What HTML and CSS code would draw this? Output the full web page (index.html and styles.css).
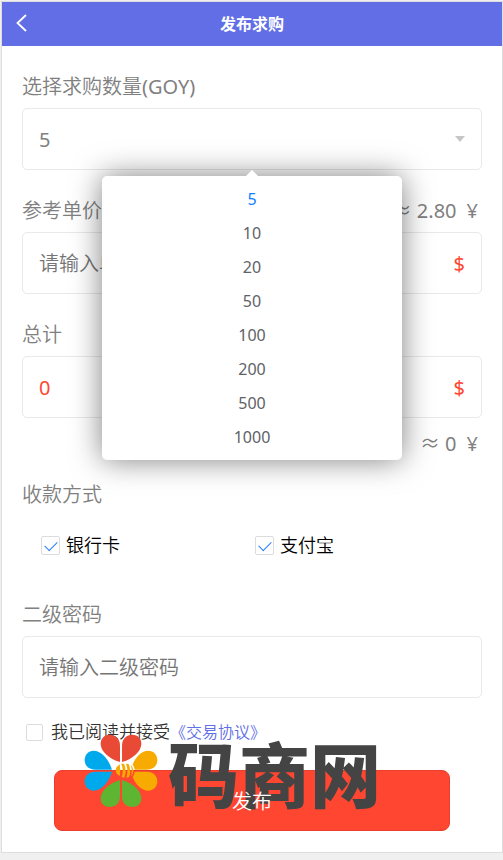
FILE: index.html
```
<!DOCTYPE html>
<html lang="zh-CN">
<head>
    <meta charset="UTF-8">
    <meta name="viewport" content="width=device-width, initial-scale=1">
    <title>发布求购</title>
    <link rel="stylesheet" href="styles.css">
</head>
<body>

<div class="page">
    <header class="header">
        <a href="#" class="back" aria-label="返回">
            <svg width="12" height="18" viewBox="0 0 12 18"><path d="M11 1 L2.5 9 L11 17" fill="none" stroke="#fff" stroke-width="1.8"/></svg>
        </a>
        <h1>发布求购</h1>
    </header>

    <form class="form">
        <div class="label-row">
            <label for="amount">选择求购数量<span class="coin">(GOY)</span></label>
        </div>
        <div class="field">
            <select id="amount">
                <option>5</option>
            </select>
            <span class="caret"></span>
            <!-- amount menu -->
            <div class="menu">
                <button type="button" class="active">5</button>
                <button type="button">10</button>
                <button type="button">20</button>
                <button type="button">50</button>
                <button type="button">100</button>
                <button type="button">200</button>
                <button type="button">500</button>
                <button type="button">1000</button>
            </div>
        </div>

        <div class="label-row">
            <label for="price">参考单价</label>
            <span class="approx"><span>≈ 2.80</span><span>¥</span></span>
        </div>
        <div class="field">
            <input type="text" id="price" placeholder="请输入单价">
            <span class="unit">$</span>
        </div>

        <div class="label-row">
            <label for="total">总计</label>
        </div>
        <div class="field">
            <input type="text" id="total" class="total" value="0" readonly>
            <span class="unit">$</span>
        </div>
        <div class="total-row">
            <span class="approx"><span>≈ 0</span><span>¥</span></span>
        </div>

        <div class="label-row pay-title">收款方式</div>
        <div class="pay">
            <label><input type="checkbox" checked>银行卡</label>
            <label><input type="checkbox" checked>支付宝</label>
        </div>

        <div class="label-row">
            <label for="password">二级密码</label>
        </div>
        <div class="field">
            <input type="password" id="password" placeholder="请输入二级密码">
        </div>

        <div class="agree">
            <input type="checkbox" id="agree">
            <label for="agree">我已阅读并接受</label><a href="#">《交易协议》</a>
        </div>

        <div class="submit">
            <button type="submit"><span>发布</span></button>
            <div class="watermark">
                <svg width="74" height="74" viewBox="0 0 222 222">
                    <g fill="#e84a35">
                        <path d="M108 84 V35 C108 12 93 2 77 2 C60 2 50 14 50 29 C50 52 75 74 108 84Z"/>
                        <path d="M114 84 V35 C114 12 129 2 145 2 C162 2 172 14 172 29 C172 52 147 74 114 84Z"/>
                    </g>
                    <g fill="#00a9eb">
                        <path d="M84 107 H35 C12 107 2 93 2 78 C2 62 13 50 29 50 C52 50 74 75 84 107Z"/>
                        <path d="M84 113 H35 C12 113 2 127 2 142 C2 158 13 170 29 170 C52 170 74 145 84 113Z"/>
                    </g>
                    <g fill="#f7aa00">
                        <path d="M152 107 H187 C210 107 220 93 220 78 C220 62 209 50 193 50 C172 50 154 70 146 92 Q151 98 152 107Z"/>
                        <path d="M152 113 H187 C210 113 220 127 220 142 C220 158 209 170 193 170 C172 170 154 150 146 128 Q151 122 152 113Z"/>
                        <path d="M107 91 Q95 99 95 109 Q95 119 107 127 Q111 109 107 91Z"/>
                        <path d="M112 89 L120 89 Q129 109 121 131 L113 129 Q120 109 112 89Z"/>
                        <path d="M126 89 L134 90 Q143 110 135 130 L127 131 Q134 110 126 89Z"/>
                        <path d="M140 92 Q148 99 148 110 Q148 121 141 127 Q146 110 140 92Z"/>
                    </g>
                    <g fill="#5db531">
                        <path d="M108 138 V187 C108 210 93 219 77 219 C60 219 50 208 50 193 C50 170 75 148 108 138Z"/>
                        <path d="M114 138 V187 C114 210 129 219 145 219 C162 219 172 208 172 193 C172 170 147 148 114 138Z"/>
                    </g>
                </svg>
                <span>码商网</span>
            </div>
        </div>
    </form>
</div>

</body>
</html>
```
FILE: styles.css
```
* {
    box-sizing: border-box;
}
body {
    margin: 0;
    padding: 1px 0 0 1px;
    background-color: #f0f0f0;
    font-family: "Noto Sans", "Noto Sans CJK SC", sans-serif;
    font-weight: 350;
    color: #808080;
}
input, select, button {
    font-family: inherit;
    font-weight: inherit;
}
.page {
    background-color: #fff;
    border: 1px solid #ddd;
}
.header {
    position: relative;
    height: 44px;
    background-color: #616ee5;
    color: #fff;
}
.header h1 {
    margin: 0;
    font-size: 16px;
    line-height: 44px;
    text-align: center;
}
.back {
    position: absolute;
    left: 13px;
    top: 12px;
}
.back svg {
    display: block;
}
.form {
    padding: 0 20px 21px;
}
.label-row {
    display: flex;
    justify-content: space-between;
    padding: 27px 0 7px;
    font-size: 20px;
    line-height: 28px;
}
.coin {
    font-weight: 400;
}
.approx {
    display: flex;
    gap: 10px;
    padding-right: 4px;
    font-weight: 400;
}
.field {
    position: relative;
    display: flex;
    align-items: center;
    height: 62px;
    padding: 0 16px;
    border: 1px solid #e9e9ec;
    border-radius: 5px;
}
.field input, .field select {
    flex: 1;
    min-width: 0;
    height: 60px;
    padding: 0;
    border: none;
    outline: none;
    background: none;
    appearance: none;
    font-size: 20px;
    color: #808080;
}
.field select {
    font-weight: 400;
}
.field input::placeholder {
    color: #757575;
}
.field input.total {
    color: #ff4631;
    font-weight: 400;
}
.caret {
    border: 5px solid transparent;
    border-top: 6px solid #c6c6c6;
    border-bottom: none;
}
.unit {
    color: #ff4631;
    font-size: 20px;
    font-weight: 400;
}
.menu {
    position: absolute;
    z-index: 10;
    top: 67px;
    left: 50%;
    width: 300px;
    margin-left: -150px;
    padding: 6px 0;
    background-color: #fff;
    border-radius: 5px;
    box-shadow: 0 0 30px rgba(0, 0, 0, 0.5);
}
.menu::before {
    content: "";
    position: absolute;
    top: -6px;
    left: 50%;
    margin-left: -6px;
    border: 6px solid transparent;
    border-top: none;
    border-bottom-color: #fff;
}
.menu button {
    display: block;
    width: 100%;
    height: 34px;
    padding: 0;
    border: none;
    background: none;
    font-size: 16px;
    font-weight: 400;
    color: #606266;
}
.menu button.active {
    color: #0f80ff;
}
.total-row {
    display: flex;
    justify-content: flex-end;
    padding-top: 12px;
    font-size: 20px;
    line-height: 28px;
}
.pay-title {
    padding-top: 23px;
}
.pay {
    display: grid;
    grid-template-columns: 1fr 1fr;
    padding: 16px 13px 16px 19px;
}
.pay label {
    display: flex;
    align-items: center;
    gap: 6px;
    font-size: 18px;
    line-height: 26px;
    color: #000;
}
input[type="checkbox"] {
    appearance: none;
    width: 19px;
    height: 19px;
    margin: 0;
    border: 1px solid #dcdcdc;
    border-radius: 2px;
    display: grid;
    place-items: center;
}
input[type="checkbox"]:checked::before {
    content: "";
    width: 11px;
    height: 6px;
    margin-top: -2px;
    border-left: 1px solid #2a80ff;
    border-bottom: 1px solid #2a80ff;
    transform: rotate(-45deg);
}
.agree {
    display: flex;
    align-items: center;
    padding: 20px 0 24px 4px;
    font-size: 17px;
    line-height: 28px;
    color: #333;
}
.agree input[type="checkbox"] {
    width: 17px;
    height: 17px;
    margin-right: 8px;
}
.agree a {
    font-size: 16px;
    color: #616ee5;
    text-decoration: none;
}
.submit {
    position: relative;
    margin: 0 32px;
}
.submit button {
    display: block;
    width: 100%;
    height: 61px;
    border: 1px solid #e8402d;
    border-radius: 8px;
    background-color: #ff4631;
    color: #fff;
    font-size: 20px;
}
/* the caption stays above the watermark */
.submit button span {
    position: relative;
    z-index: 2;
}
.watermark {
    position: absolute;
    z-index: 1;
    left: 30px;
    top: -36px;
    display: flex;
    align-items: center;
    gap: 10px;
    pointer-events: none;
}
.watermark span {
    font-family: "Noto Sans CJK SC", sans-serif;
    font-size: 71px;
    line-height: 72px;
    font-weight: 900;
    color: #444;
    white-space: nowrap;
}
```
